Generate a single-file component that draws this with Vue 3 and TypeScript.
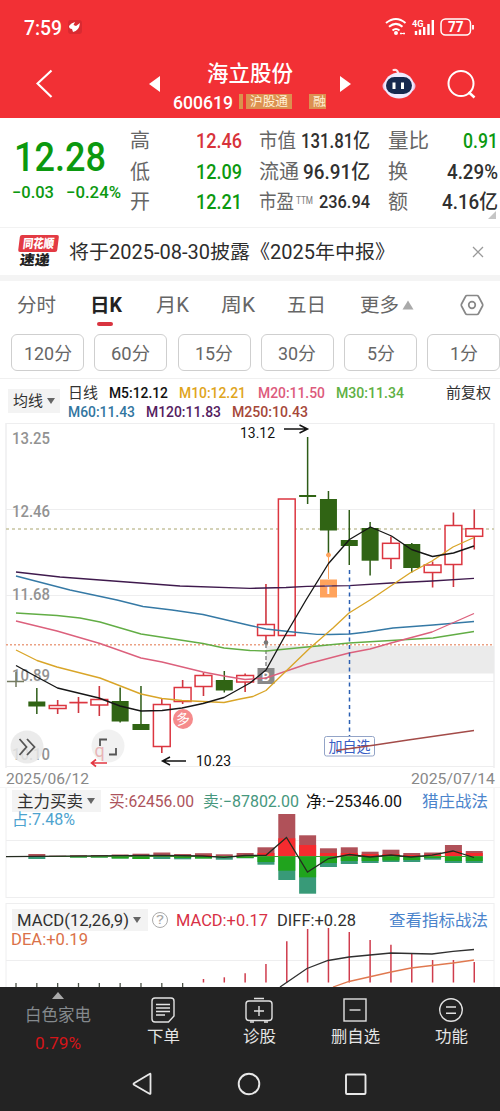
<script setup lang="ts">
import { h, type FunctionalComponent } from 'vue'

interface FitProps { t: string; w: number; s: number; b?: number }

const Fit: FunctionalComponent<FitProps> = (p) =>
  h('svg', { width: p.w, height: Math.round(p.s * 1.2), style: { display: 'block', flex: 'none', overflow: 'visible' } }, [
    h('text', {
      x: 0, y: p.s * 0.96, textLength: p.w, lengthAdjust: 'spacingAndGlyphs',
      'font-size': p.s, 'font-weight': p.b ?? 400, fill: 'currentColor',
    }, p.t),
  ])
Fit.props = ['t', 'w', 's', 'b']

interface Cell { label: string; lw: number; sup?: string; value: string; vw: number; vs?: number; tone: string }
const cells: Cell[] = [
  { label: '高', lw: 20, value: '12.46', vw: 46, tone: 'up' },
  { label: '市值', lw: 37, value: '131.81亿', vw: 69, tone: 'ink' },
  { label: '量比', lw: 41, value: '0.91', vw: 35, tone: 'down' },
  { label: '低', lw: 20, value: '12.09', vw: 46, tone: 'down' },
  { label: '流通', lw: 40, value: '96.91亿', vw: 67, tone: 'ink' },
  { label: '换', lw: 20, value: '4.29%', vw: 51, tone: 'ink' },
  { label: '开', lw: 20, value: '12.21', vw: 46, tone: 'down' },
  { label: '市盈', lw: 35, sup: 'TTM', value: '236.94', vw: 51, vs: 18, tone: 'ink' },
  { label: '额', lw: 20, value: '4.16亿', vw: 56, tone: 'ink' },
]

const tabs = [
  { t: '分时', w: 39, gap: 34.5 }, { t: '日K', w: 32, gap: 34 , on: true }, { t: '月K', w: 33, gap: 32 },
  { t: '周K', w: 34, gap: 32 }, { t: '五日', w: 39, gap: 34 }, { t: '更多', w: 39, gap: 3 },
]
const periods = [
  { t: '120分', w: 48 }, { t: '60分', w: 39 }, { t: '15分', w: 38 }, { t: '30分', w: 38 }, { t: '5分', w: 28 }, { t: '1分', w: 28 },
]
const maTop = [
  { t: 'M5:12.12', w: 59, c: 'k' }, { t: 'M10:12.21', w: 67, c: 'y' }, { t: 'M20:11.50', w: 67, c: 'p' }, { t: 'M30:11.34', w: 68, c: 'g' },
]
const maBottom = [
  { t: 'M60:11.43', w: 67, c: 'b' }, { t: 'M120:11.83', w: 75, c: 'v' }, { t: 'M250:10.43', w: 76, c: 'r' },
]

const cx = (i: number) => 16 + i * 20.83

// index, direction, body top, body bottom, wick top, wick bottom
type Candle = [number, 'u' | 'd', number, number, number, number]
const candles: Candle[] = [
  [1, 'd', 701.5, 706.5, 688, 714], [2, 'u', 705.5, 708.5, 700, 714], [3, 'u', 702.5, 702.7, 697, 713],
  [4, 'u', 699.5, 705, 686, 716], [5, 'd', 701, 721.5, 687.5, 722.5], [6, 'd', 724, 730, 686, 730],
  [7, 'u', 704.5, 746.5, 698, 753], [8, 'u', 687.5, 701.5, 680, 704], [9, 'u', 675.5, 686.5, 672.5, 696],
  [10, 'd', 680, 690.5, 671, 692.5], [11, 'u', 675.5, 682, 673.5, 692], [12, 'u', 624.5, 635.5, 584, 641],
  [13, 'u', 499, 635.5, 499, 635.5], [14, 'd', 495, 497, 437, 504], [15, 'd', 499, 530.5, 491, 555],
  [16, 'd', 540, 546, 510, 565], [17, 'd', 528, 560.7, 522, 575.5], [18, 'u', 543.3, 558.5, 536.5, 569],
  [19, 'd', 544, 568, 543, 572.5], [20, 'u', 565, 572.5, 561.5, 587.5], [21, 'u', 525.5, 564.5, 512.5, 587],
  [22, 'u', 528.7, 536.3, 509.5, 549.5],
]

const averages = [
  { c: '#3f1a4d', p: '16,572 60,577 120,581.5 180,586 250,588.4 286,587.5 307,586.3 349,585.7 391,583 432,581 474,578.3' },
  { c: '#3579a5', p: '16,576 70,590 117,600 143,606.5 172,610 203,614.5 250,625.5 266,629 293,632 317,634.3 330,634.5 350,634 367,632 393,628 433,625 474,621.5' },
  { c: '#62ad45', p: '16,613 57,615.5 80,618 100,622 141,634 203,643.5 224,648 250,650.5 266,651 307,647 349,643 391,640.5 433,638 474,631.5' },
  { c: '#dc607c', p: '16,621 57,631 100,643.5 141,658 162,662 203,672 224,676 245,679.5 266,678 307,664 349,653 370,649 391,643 432,632 474,613.5' },
  { c: '#d9a528', p: '16,650 37,660.5 57,667 100,678 141,694 162,698.5 182,700.5 224,702.5 240,699 253,696.5 266,690.5 283,674 310,648 333,628 349,613 370,600 410,573 432,561 453,547 474,537.5' },
  { c: '#161616', p: '16,665.5 37,677 57.5,688 99,698 120,706 141,711 162,710.5 182,708 203,703.5 224,697.5 250,683 266,670 286,634 306,600 328.5,563.5 349.5,539.5 370.5,527 391.5,536 411.5,549.5 432.5,556.5 453.5,553 474,546' },
  { c: '#a34b48', p: '336,750.5 375,745 408,740 474,730.5' },
]
const axis = [
  { t: '13.25', y: 443.5 }, { t: '12.46', y: 517.3 }, { t: '11.68', y: 599.5 }, { t: '10.89', y: 680.7 }, { t: '10.10', y: 759.5 },
]

// index, top, bright-red top, bright-green bottom, bottom
const flows: [number, number, number, number, number][] = [
  [1, 854, 856, 857, 859], [2, 855.7, 856, 857, 857], [3, 855.2, 856, 857.5, 857.5], [4, 855, 856, 857.5, 857.5], [5, 854.5, 856, 858.5, 858.5],
  [6, 853.7, 855, 859, 859], [7, 852.5, 855, 857, 859], [8, 854, 855, 858, 859.3], [9, 853.2, 855, 858.5, 858.5],
  [10, 854.3, 856, 857, 859.7], [11, 853, 855, 858, 858.3], [12, 847.3, 853, 862, 864.7], [13, 814, 838.3, 870.7, 880],
  [14, 835.3, 845, 877.3, 893.7], [15, 848.3, 853, 863, 867], [16, 847.3, 853, 861, 864], [17, 851.7, 854, 861, 863],
  [18, 849.7, 854, 860.5, 862], [19, 853, 855, 860, 862], [20, 852.5, 854.5, 858, 859.7], [21, 845, 851, 861, 863], [22, 851, 853, 861, 863],
]
const netLine = '6,856.7 37,856.3 120,855.7 162,855.3 203,856 224,857.3 245,855.5 266,855.3 286.5,837.5 307.5,872 328.5,858.5 349.5,854.5 370,857 391,855 411,857 432,855.2 453,851 474,857.5'
const macdTops = [979, 977.3, 973.3, 964, 941.3, 929, 928, 932, 940, 944.7, 954, 960, 960, 962]
</script>

<template>
  <main class="screen">
    <header class="head">
      <div class="status">
        <Fit t="7:59" :w="38" :s="20.5" :b="500" />
        <svg class="bird" width="14" height="14" viewBox="0 0 14 14"><rect width="14" height="14" rx="3" fill="#d92a31" /><path d="M1 6Q3 3 7 2L5.500 5L8 6L12 3Q11 11 5 12L4 9Q1 9 1 6Z" fill="#fff" /></svg>
        <svg class="signals" width="90" height="20" viewBox="385 16 90 20" fill="none" stroke="#fff">
          <g stroke-width="2"><path d="M386 22Q396 14 405.500 22M389 25.800Q396 20 402.500 25.800M392.500 29.500Q396 26.500 399.500 29.500" /></g>
          <circle cx="396" cy="32" r="2" fill="#fff" stroke="none" /><path d="M400 32.500h5M401 31.500v2M404 31.500v2" stroke-width="1" />
          <text x="412" y="26" font-size="9.500" font-weight="700" fill="#fff" stroke="none" textLength="11.500" lengthAdjust="spacingAndGlyphs">4G</text>
          <path d="M416 30v4M420 28.500v5.500M424.200 26v8M428.500 23v11M432.800 19v15" stroke-width="2.400" />
          <rect x="441" y="18" width="29.500" height="16" rx="4.500" stroke-width="1.500" /><path d="M473 24v4.500" stroke-width="1.800" />
          <text x="448" y="31" font-size="14" font-weight="700" fill="#fff" stroke="none" textLength="15.500" lengthAdjust="spacingAndGlyphs">77</text>
        </svg>
      </div>
      <div class="nav">
        <svg width="18" height="30" viewBox="0 0 18 30"><path d="M15.500 1.500L1.500 14.500L15.500 28" fill="none" stroke="#fff" stroke-width="2.200" /></svg>
        <svg class="prev" width="12" height="16" viewBox="0 0 12 16"><path d="M11 0V16L0 8Z" fill="#fff" /></svg>
        <div class="title">
          <Fit t="海立股份" :w="86" :s="21.5" :b="500" />
          <div class="code">
            <Fit t="600619" :w="60" :s="18.5" :b="500" />
            <i class="sliver"></i>
            <span class="tag"><Fit t="沪股通" :w="38" :s="12.5" /></span>
            <span class="tag cut"><Fit t="融" :w="13" :s="12.5" /></span>
          </div>
        </div>
        <svg class="next" width="12" height="16" viewBox="0 0 12 16"><path d="M0 0V16L11 8Z" fill="#fff" /></svg>
        <svg class="robot" width="34" height="34" viewBox="0 0 34 34">
          <path d="M11.500 3Q15 2 16 5.500" fill="none" stroke="#ffe3e8" stroke-width="2.200" stroke-linecap="round" />
          <ellipse cx="17" cy="19" rx="16.500" ry="9" fill="#e9bde0" /><ellipse cx="17" cy="18.500" rx="14.800" ry="13" fill="#f0eaff" />
          <rect x="4" y="10" width="26" height="17" rx="8.500" fill="#17294f" /><path d="M12 15.500v6.500M20.500 15.500v6.500" stroke="#fff" stroke-width="3" />
        </svg>
        <svg class="search" width="30" height="30" viewBox="0 0 30 30" fill="none" stroke="#fff" stroke-width="2"><circle cx="14" cy="14.500" r="12.500" /><path d="M21.500 23L27.500 28.500" stroke-width="2.500" /></svg>
      </div>
    </header>

    <section class="quote">
      <div class="price">
        <Fit t="12.28" :w="92" :s="41" :b="500" />
        <div class="change"><Fit t="−0.03" :w="42" :s="16.5" :b="500" /><Fit t="−0.24%" :w="55" :s="16.5" :b="500" /></div>
      </div>
      <div class="stats">
        <div v-for="c in cells" :key="c.label" class="stat">
          <Fit :t="c.label" :w="c.lw" :s="20" />
          <Fit v-if="c.sup" class="sup" :t="c.sup" :w="17" :s="10" />
          <Fit class="val" :class="c.tone" :t="c.value" :w="c.vw" :s="c.vs ?? 20" :b="500" />
        </div>
      </div>
      <i class="corner"></i>
    </section>

    <section class="news">
      <div class="brand"><span class="brand-top"><Fit t="同花顺" :w="31" :s="12.5" :b="900" /></span><Fit class="brand-low" t="速递" :w="30" :s="14" :b="900" /></div>
      <Fit class="headline" t="将于2025-08-30披露《2025年中报》" :w="326" :s="19.3" />
      <svg class="close" width="12" height="12" viewBox="0 0 12 12"><path d="M1 1L11 11M11 1L1 11" stroke="#999" stroke-width="1.300" /></svg>
    </section>

    <nav class="tabs">
      <div v-for="t in tabs" :key="t.t" class="tab" :class="{ on: t.on }" :style="{ marginRight: t.gap + 'px' }">
        <Fit :t="t.t" :w="t.w" :s="19.3" :b="t.on ? 700 : 400" />
      </div>
      <svg width="12" height="10" viewBox="0 0 12 10"><path d="M6 .500L11.500 9.500H.500Z" fill="#aaa" /></svg>
      <svg class="gear" width="24" height="22" viewBox="0 0 24 22" fill="none" stroke="#888" stroke-width="1.700" stroke-linejoin="round"><path d="M7 1.500H17Q18 1.500 18.500 2.500L22.500 10Q23 11 22.500 12L18.500 19.500Q18 20.500 17 20.500H7Q6 20.500 5.500 19.500L1.500 12Q1 11 1.500 10L5.500 2.500Q6 1.500 7 1.500Z" /><circle cx="12" cy="11" r="3.300" /></svg>
    </nav>
    <div class="periods">
      <div v-for="p in periods" :key="p.t" class="period"><Fit :t="p.t" :w="p.w" :s="18.3" /></div>
    </div>

    <section class="legend">
      <div class="select ma"><Fit t="均线" :w="30" :s="15" /><i class="caret"></i></div>
      <div class="averages">
        <div class="line"><Fit t="日线" :w="30" :s="15" /><Fit v-for="m in maTop" :key="m.t" :class="m.c" :t="m.t" :w="m.w" :s="15" :b="500" /></div>
        <div class="line"><Fit v-for="m in maBottom" :key="m.t" :class="m.c" :t="m.t" :w="m.w" :s="15" :b="500" /></div>
      </div>
      <Fit class="adjust" t="前复权" :w="45" :s="15" />
    </section>

    <svg class="kline" width="500" height="345" viewBox="0 423 500 345">
      <g stroke="#eeeeef"><path d="M6 423.500H494M6 509.500H494M6 595.500H494M6 681.500H494M6 766.500H494" fill="none" /><path d="M6 423V768M494 423V768" stroke-width="1.500" /></g>
      <rect x="266" y="646" width="228" height="27.500" fill="#ebebeb" />
      <g font-size="16" fill="#929292"><text v-for="a in axis" :key="a.t" x="12" :y="a.y" textLength="38" lengthAdjust="spacingAndGlyphs" font-weight="500">{{ a.t }}</text></g>
      <path d="M6 529H494" stroke="#c6c3a0" stroke-width="1.300" stroke-dasharray="3 3" />
      <path d="M6 644.700H494" stroke="#eba184" stroke-width="1.400" stroke-dasharray="2 2" />
      <path d="M7 681.500H24M16 672V687" stroke="#747b62" stroke-width="1.500" />

      <text x="94.500" y="757" font-size="18" fill="#e9686c">q</text>
      <circle cx="27" cy="747" r="16.500" fill="#e8e8e8" fill-opacity=".86" />
      <circle cx="108" cy="746" r="16.500" fill="#e8e8e8" fill-opacity=".6" />
      <g fill="none" stroke="#555" stroke-width="1.800"><path d="M19.500 739L26.500 747L19.500 755M27 739L34.500 747L27 755M100 746V739.500H107M109 754.500H116V748" /></g>
      <path d="M107 763H91.500M96 759.500L91.500 763L96 766.500" stroke="#e33843" stroke-width="1.600" fill="none" />

      <g v-for="c in candles" :key="c[0]">
        <template v-if="c[1] === 'u'">
          <path :d="`M${cx(c[0])} ${c[4]}V${c[2]}M${cx(c[0])} ${c[3]}V${c[5]}`" stroke="#cf3640" stroke-width="1.600" />
          <rect :x="cx(c[0]) - 8.400" :y="c[2]" width="16.800" :height="c[3] - c[2]" fill="#fff" stroke="#dc3640" stroke-width="1.500" />
        </template>
        <template v-else>
          <path :d="`M${cx(c[0])} ${c[4]}V${c[5]}`" stroke="#2d5c17" stroke-width="1.500" />
          <rect :x="cx(c[0]) - 8.500" :y="c[2]" width="17" :height="c[3] - c[2]" fill="#306414" />
        </template>
      </g>
      <g stroke="#ffa35c" fill="#ffa35c"><circle cx="328.500" cy="555" r="2" /><path d="M328.500 557V579" /><rect x="320.500" y="580" width="16" height="17" /></g>
      <text x="324.800" y="593.500" font-size="12" fill="#fff" font-weight="700">T</text>
      <circle cx="266" cy="642.500" r="2.300" fill="#777" /><path d="M266 644V668" stroke="#888" stroke-width="1.500" stroke-dasharray="4 2" />
      <rect x="257.500" y="668" width="17" height="16" fill="#898989" /><text x="261.800" y="680.800" font-size="12.500" fill="#fff" font-weight="700">B</text>
      <circle cx="183" cy="719" r="10" fill="#f58b8c" /><text x="176" y="724" font-size="14" fill="#fff" transform="rotate(-8 183 719)">多</text>
      <rect x="324.500" y="736.500" width="50" height="19.500" rx="2" fill="#fff" stroke="#93a4c7" />
      <text x="328.500" y="752" font-size="14.500" fill="#385ec4" textLength="42" lengthAdjust="spacingAndGlyphs">加自选</text>
      <polyline v-for="a in averages" :key="a.c" :points="a.p" fill="none" :stroke="a.c" stroke-width="1.350" stroke-linejoin="round" />
      <path d="M349.500 570V736" stroke="#2b5fb2" stroke-width="1.500" stroke-dasharray="4 3.500" />
      <g fill="#111" font-size="14.500"><text x="240" y="437.500" textLength="35" lengthAdjust="spacingAndGlyphs">13.12</text><text x="196" y="766" textLength="35" lengthAdjust="spacingAndGlyphs">10.23</text></g>
      <path d="M284 429H307M299.500 425L307.500 429L299.500 433M186 761H162.500M170 757L162.500 761L170 765" fill="none" stroke="#111" stroke-width="1.500" />
    </svg>
    <div class="dates"><Fit t="2025/06/12" :w="83" :s="15.5" /><Fit t="2025/07/14" :w="84" :s="15.5" /></div>

    <section class="panel force">
      <svg class="plot" width="500" height="110" viewBox="0 788 500 110">
        <path d="M6 840.500H494M6 897.500H494M6 788V898M494 788V898" stroke="#eeeeef" fill="none" />
        <g v-for="f in flows" :key="f[0]">
          <rect :x="cx(f[0]) - 8.500" :y="f[1]" width="17" :height="856.300 - f[1]" fill="#b05159" />
          <rect :x="cx(f[0]) - 8.500" :y="f[2]" width="17" :height="Math.max(0, 856.300 - f[2])" fill="#f52b2f" />
          <rect :x="cx(f[0]) - 8.500" y="856.300" width="17" :height="f[4] - 856.300" fill="#389a78" />
          <rect :x="cx(f[0]) - 8.500" y="856.300" width="17" :height="f[3] - 856.300" fill="#20a31d" />
        </g>
        <path d="M6 856.500H482" stroke="#3f9e30" stroke-width="1.200" />
        <polyline :points="netLine" fill="none" stroke="#242b20" stroke-width="1.300" />
      </svg>
      <div class="bar">
        <div class="select wide"><Fit t="主力买卖" :w="66" :s="16.3" /><i class="caret"></i></div>
        <Fit class="buy" t="买:62456.00" :w="85" :s="16" /><Fit class="sell" t="卖:−87802.00" :w="96" :s="16" /><Fit class="net" t="净:−25346.00" :w="96" :s="16" />
        <Fit class="link" t="猎庄战法" :w="66" :s="16.3" />
      </div>
      <Fit class="share" t="占:7.48%" :w="63" :s="16" />
    </section>

    <section class="panel macd">
      <svg class="plot" width="500" height="84" viewBox="0 903 500 84">
        <path d="M6 903.500H494M6 960.500H494M6 903V987M494 903V987" stroke="#eeeeef" fill="none" />
        <path v-for="(y, i) in macdTops" :key="i" :d="`M${cx(i + 9)} ${y}V982.500`" stroke="#cf3c4d" stroke-width="1.500" />
        <path v-for="i in 9" :key="i" :d="`M${cx(i - 1)} 983V987`" stroke="#4c5349" stroke-width="1.300" />
        <polyline points="280,987 307,968.500 328,960.500 349,957 370,955 391,953 411,953.500 432,954 453,951.300 474,949.500" fill="none" stroke="#303030" stroke-width="1.300" />
        <polyline points="333,987 349,981.500 391,972 411,968 432,965.500 453,963 474,960" fill="none" stroke="#e07950" stroke-width="1.300" />
      </svg>
      <div class="bar">
        <div class="select widest"><Fit t="MACD(12,26,9)" :w="112" :s="16.3" /><i class="caret"></i></div>
        <span class="help"><Fit t="?" :w="8" :s="13" /></span>
        <Fit class="m1" t="MACD:+0.17" :w="92" :s="16.3" /><Fit class="m2" t="DIFF:+0.28" :w="79" :s="16.3" />
        <Fit class="link" t="查看指标战法" :w="99" :s="16.3" />
      </div>
      <Fit class="dea" t="DEA:+0.19" :w="77" :s="16" />
    </section>

    <footer class="foot">
      <div class="actions">
        <div class="sector">
          <svg width="12" height="7" viewBox="0 0 12 7"><path d="M6 0L12 7H0Z" fill="#aaa" /></svg>
          <Fit class="sector-name" t="白色家电" :w="66" :s="16.5" /><Fit class="sector-rate" t="0.79%" :w="46" :s="16" />
        </div>
        <div class="action">
          <svg width="28" height="26" viewBox="0 0 28 26" fill="none" stroke="#e2e2e2" stroke-width="1.400"><path d="M6 1H22Q25 1 25 4V19L19.500 25H6Q3 25 3 22V4Q3 1 6 1Z" /><path d="M7 7.500H21M7 11H21M7 14.500H21M7 18H16" /></svg>
          <Fit t="下单" :w="33" :s="16.3" />
        </div>
        <div class="action">
          <svg width="28" height="26" viewBox="0 0 28 26" fill="none" stroke="#e2e2e2" stroke-width="1.400"><rect x="1" y="4" width="26" height="19.500" rx="3" /><path d="M9 1.500H19M14 9V19M9 14H19M5 25H9M19 25H23" /></svg>
          <Fit t="诊股" :w="33" :s="16.3" />
        </div>
        <div class="action">
          <svg width="28" height="26" viewBox="0 0 28 26" fill="none" stroke="#e2e2e2" stroke-width="1.400"><rect x="3" y="2" width="22" height="22" /><path d="M8.500 13H19.500" /></svg>
          <Fit t="删自选" :w="49" :s="16.3" />
        </div>
        <div class="action">
          <svg width="28" height="26" viewBox="0 0 28 26" fill="none" stroke="#e2e2e2" stroke-width="1.400"><circle cx="14" cy="13" r="11.300" /><path d="M9 10H19M9 16.200H19" /></svg>
          <Fit t="功能" :w="33" :s="16.3" />
        </div>
      </div>
      <div class="system">
        <svg width="22" height="24" viewBox="0 0 22 24"><path d="M18.500 2.200V21.300Q18.500 22.300 17.500 21.800L2 12.700Q1 12 2 11.300L17.500 1.900Q18.500 1.200 18.500 2.200Z" fill="none" stroke="#e8e8e8" stroke-width="1.800" /></svg>
        <svg width="24" height="24" viewBox="0 0 24 24"><circle cx="12" cy="12" r="10.300" fill="none" stroke="#e8e8e8" stroke-width="1.900" /></svg>
        <svg width="24" height="24" viewBox="0 0 24 24"><rect x="2" y="2.500" width="19.500" height="19.500" rx="1" fill="none" stroke="#e8e8e8" stroke-width="1.900" /></svg>
      </div>
    </footer>
  </main>
</template>

<style>
html, body { margin: 0; background: #fff; }
</style>

<style scoped>
.screen { width: 500px; height: 1111px; overflow: hidden; background: #fff; color: #333; font-family: Roboto, "Noto Sans CJK SC", sans-serif; display: flex; flex-direction: column; }
.screen > * { flex: none; box-sizing: border-box; }
svg { flex: none; display: block; }

.head { height: 118px; background: #f23035; color: #fff; }
.status { height: 54px; display: flex; align-items: center; padding: 0 25px 0 24px; box-sizing: border-box; }
.bird { margin-left: 6px; }
.signals { margin-left: auto; }
.nav { height: 60px; display: flex; align-items: center; padding-left: 36px; }
.prev { margin-left: 95px; }
.title { margin-left: 12px; width: 153px; margin-right: 1px; display: flex; flex-direction: column; align-items: center; gap: 5px; padding-top: 4px; }
.code { display: flex; align-items: center; width: 153px; overflow: hidden; }
.sliver { width: 4px; height: 15px; background: #d9924d; margin: 0 3px 0 6px; }
.tag { background: #dc9050; color: #fff0d6; height: 15px; padding: 0 4px; display: flex; align-items: center; }
.tag.cut { margin-left: 17px; padding: 0 0 0 4px; }
.next { margin-left: 13px; }
.robot { margin-left: 30px; }
.search { margin-left: 31px; }

.quote { height: 110px; position: relative; display: flex; border-bottom: 1px solid #f2f2f2; }
.price { width: 120px; margin-right: 10px; color: #0b990f; padding: 14px 0 0 0; display: flex; flex-direction: column; align-items: center; box-sizing: border-box; }
.change { display: flex; gap: 12px; margin: 1px 0 0 12px; }
.stats { display: grid; grid-template-columns: 111.500px 111px 110.500px; grid-template-rows: repeat(3, 30.500px); column-gap: 17.500px; padding-top: 8px; }
.stat { display: flex; align-items: center; color: #666; }
.sup { align-self: flex-start; margin: 7px 0 0 1.500px; color: #777; }
.val { margin-left: auto; }
.ink { color: #303030; }
.up { color: #d8333a; }
.down { color: #0b990f; }
.corner { position: absolute; right: 4px; bottom: 8px; border: 4px solid transparent; border-right-color: #c5c5c5; border-bottom-color: #c5c5c5; }

.news { height: 53px; border-bottom: 6px solid #f4f4f4; display: flex; align-items: center; padding-left: 17px; }
.brand { width: 40px; display: flex; flex-direction: column; align-items: center; transform: skewX(-7deg); margin: 1px 2px 0 0; }
.brand-top { width: 39px; height: 17px; background: #e33a43; color: #fff; border-radius: 2px; display: flex; align-items: center; justify-content: center; }
.brand-low { color: #222; margin-right: 2px; }
.headline { margin-left: 10px; color: #2d2d2d; }
.close { margin-left: 77px; }

.tabs { height: 47px; display: flex; align-items: center; padding-left: 16.500px; color: #666; }
.tab { position: relative; }
.tab.on { color: #222; }
.tab.on::after { content: ""; position: absolute; left: 7px; top: 29px; width: 16px; height: 4px; border-radius: 2px; background: #d93440; }
.gear { margin-left: 46px; }
.periods { height: 51px; padding: 6px 0 0 11px; display: flex; gap: 10.300px; border-bottom: 1px solid #f0f0f0; overflow: hidden; }
.period { flex: none; width: 73px; height: 37px; border: 1px solid #cfcfcf; border-radius: 6px; box-sizing: border-box; display: flex; align-items: center; justify-content: center; color: #666; }

.legend { height: 44px; display: flex; padding: 5px 0 0 8px; }
.select { background: #f3f3f3; display: flex; align-items: center; gap: 4px; padding-left: 5px; box-sizing: border-box; color: #303030; flex: none; }
.caret { border: 4.500px solid transparent; border-top: 6px solid #666; border-bottom: 0; }
.ma { width: 52px; height: 24px; margin-top: 5px; }
.averages { margin-left: 8px; display: flex; flex-direction: column; gap: 1px; }
.line { display: flex; gap: 11.200px; }
.adjust { margin-left: 42px; }
.k { color: #111; } .y { color: #dfa51c; } .p { color: #dd5b7c; } .g { color: #60b044; }
.b { color: #33769f; } .v { color: #551d5f; } .r { color: #a6483a; }
.dates { height: 20px; display: flex; justify-content: space-between; padding: 1px 5px 0 6px; color: #888; border-bottom: 1px solid #f5f5f5; }

.panel { position: relative; }
.plot { position: absolute; inset: 0; }
.bar { position: relative; display: flex; align-items: center; padding-left: 12px; height: 22px; }
.force { height: 115px; padding-top: 2px; }
.wide { width: 89px; height: 22px; }
.buy { margin-left: 8px; color: #ad535c; }
.sell { margin-left: 9px; color: #46977d; }
.net { margin-left: 7px; color: #111; }
.link { margin-left: auto; margin-right: 12px; color: #4b84cc; }
.share { position: relative; margin-left: 12px; margin-top: -2px; color: #4da3cf; }
.macd { height: 84px; padding-top: 6px; overflow: hidden; }
.widest { width: 136px; height: 22px; }
.help { width: 14px; height: 14px; border: 1px solid #aaa; border-radius: 50%; margin-left: 4px; display: flex; align-items: center; justify-content: center; color: #aaa; flex: none; }
.m1 { margin-left: 8px; color: #d83045; }
.m2 { margin-left: 9px; color: #303030; }
.dea { position: relative; margin: -1px 0 0 11px; color: #db7148; }

.foot { height: 124px; background: #232323; color: #e5e5e5; }
.actions { display: flex; height: 70px; }
.sector { width: 115px; padding-top: 5px; display: flex; flex-direction: column; align-items: center; box-sizing: border-box; }
.sector-name { color: #858a8e; margin-top: 6px; }
.sector-rate { color: #d51519; margin-top: 9px; }
.action { width: 96px; padding-top: 10px; display: flex; flex-direction: column; align-items: center; gap: 3px; box-sizing: border-box; }
.system { display: flex; align-items: center; padding: 15px 0 0 132px; }
.system svg + svg { margin-left: 83px; }
</style>
